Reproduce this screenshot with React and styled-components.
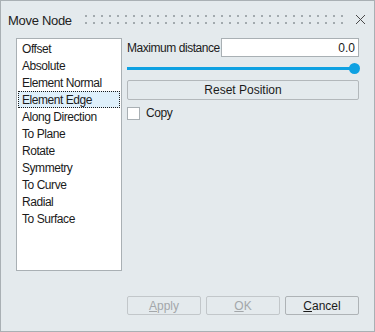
import React, { useState } from "react";
import styled, { createGlobalStyle } from "styled-components";

const GlobalStyle = createGlobalStyle`
  html, body {
    margin: 0;
    padding: 0;
    background: #e4eaed;
  }
  * {
    box-sizing: border-box;
  }
`;

const modes = [
  "Offset",
  "Absolute",
  "Element Normal",
  "Element Edge",
  "Along Direction",
  "To Plane",
  "Rotate",
  "Symmetry",
  "To Curve",
  "Radial",
  "To Surface",
];

const CloseIcon = () => (
  <svg width="11" height="11" viewBox="0 0 11 11">
    <path d="M1 1L10 10M10 1L1 10" stroke="#4a4a4a" strokeWidth="1" fill="none" />
  </svg>
);

const Hotkey = ({ label }) => (
  <span>
    <u>{label[0]}</u>
    {label.slice(1)}
  </span>
);

const App = () => {
  const [selected, setSelected] = useState("Element Edge");
  const [copy, setCopy] = useState(false);

  return (
    <Window>
      <GlobalStyle />
      <TitleBar>
        <Title>Move Node</Title>
        <Grip />
        <CloseButton>
          <CloseIcon />
        </CloseButton>
      </TitleBar>
      <Body>
        <ModeList>
          {modes.map((m) => (
            <ModeItem key={m} active={m === selected} onClick={() => setSelected(m)}>
              {m}
            </ModeItem>
          ))}
        </ModeList>
        <Panel>
          <FieldRow>
            <Label>Maximum distance</Label>
            <NumberInput defaultValue="0.0" />
          </FieldRow>
          <Slider>
            <Track />
            <Thumb />
          </Slider>
          <WideButton>Reset Position</WideButton>
          <CheckRow>
            <CheckBox checked={copy} onClick={() => setCopy(!copy)} />
            <span>Copy</span>
          </CheckRow>
        </Panel>
      </Body>
      <Footer>
        <DialogButton disabled>
          <Hotkey label="Apply" />
        </DialogButton>
        <DialogButton disabled>
          <Hotkey label="OK" />
        </DialogButton>
        <DialogButton>
          <Hotkey label="Cancel" />
        </DialogButton>
      </Footer>
    </Window>
  );
};

const Window = styled.div`
  width: 375px;
  height: 332px;
  border: 1px solid #a9b0b4;
  background: #e4eaed;
  display: flex;
  flex-direction: column;
  font-family: "Liberation Sans", Arial, sans-serif;
  font-size: 12px;
  letter-spacing: -0.45px;
  color: #1b1b1b;
`;

const TitleBar = styled.div`
  height: 37px;
  display: flex;
  align-items: center;
  padding: 0 7px 0 7px;
`;

const Title = styled.div`
  font-size: 13px;
  letter-spacing: -0.3px;
  color: #222;
  width: 77px;
  margin-top: 1px;
`;

const Grip = styled.div`
  flex: 1;
  height: 9px;
  margin-right: 9px;
  background-image: linear-gradient(90deg, #a2aaae 2px, transparent 2px),
    linear-gradient(90deg, #a2aaae 2px, transparent 2px);
  background-size: 8px 2px, 8px 2px;
  background-position: 0 0, 0 7px;
  background-repeat: repeat-x;
`;

const CloseButton = styled.div`
  width: 14px;
  height: 14px;
  display: flex;
  align-items: center;
  justify-content: center;
`;

const Body = styled.div`
  display: flex;
  gap: 5px;
  padding: 0 15px;
`;

const ModeList = styled.div`
  flex-shrink: 0;
  width: 106px;
  height: 233px;
  background: #fff;
  border: 1px solid #a9b0b4;
  padding: 1px 1px;
  display: flex;
  flex-direction: column;
`;

const ModeItem = styled.div`
  height: 17px;
  line-height: 16px;
  padding-left: 3px;
  white-space: nowrap;
  cursor: default;
  border: 1px dotted ${(p) => (p.active ? "#1b1b1b" : "transparent")};
  background: ${(p) => (p.active ? "#dff0fb" : "transparent")};
`;

const Panel = styled.div`
  flex: 1;
  min-width: 0;
  display: flex;
  flex-direction: column;
`;

const FieldRow = styled.div`
  display: flex;
  align-items: center;
  justify-content: space-between;
  height: 19px;
`;

const Label = styled.span`
  white-space: nowrap;
`;

const NumberInput = styled.input`
  width: 138px;
  height: 19px;
  border: 1px solid #a9b0b4;
  background: #fff;
  text-align: right;
  font: inherit;
  color: #1b1b1b;
  padding: 0 3px;
  outline: none;
`;

const Slider = styled.div`
  position: relative;
  height: 11px;
  margin: 6px 0 6px;
  display: flex;
  align-items: center;
`;

const Track = styled.div`
  flex: 1;
  height: 3px;
  background: #0ea1e2;
`;

const Thumb = styled.div`
  position: absolute;
  right: -1px;
  top: 0;
  width: 11px;
  height: 11px;
  border-radius: 50%;
  background: #0ea1e2;
`;

const WideButton = styled.button`
  height: 20px;
  width: 100%;
  border: 1px solid #b3b8bb;
  border-radius: 2px;
  background: #e4eaed;
  font: inherit;
  color: #1b1b1b;
  padding: 0;
`;

const CheckRow = styled.div`
  display: flex;
  align-items: center;
  gap: 6px;
  margin-top: 6px;
  height: 14px;
`;

const CheckBox = styled.div`
  width: 13px;
  height: 13px;
  border: 1px solid #a9b0b4;
  background: #fff;
`;

const Footer = styled.div`
  margin-top: auto;
  display: flex;
  justify-content: flex-end;
  gap: 5px;
  padding: 0 15px 16px;
`;

const DialogButton = styled.button`
  width: 74px;
  height: 19px;
  border: 1px solid ${(p) => (p.disabled ? "#c2c7ca" : "#aeb3b6")};
  border-radius: 2px;
  background: #e4eaed;
  font: inherit;
  color: ${(p) => (p.disabled ? "#a3a7aa" : "#1b1b1b")};
  padding: 0;
`;

export default App;
